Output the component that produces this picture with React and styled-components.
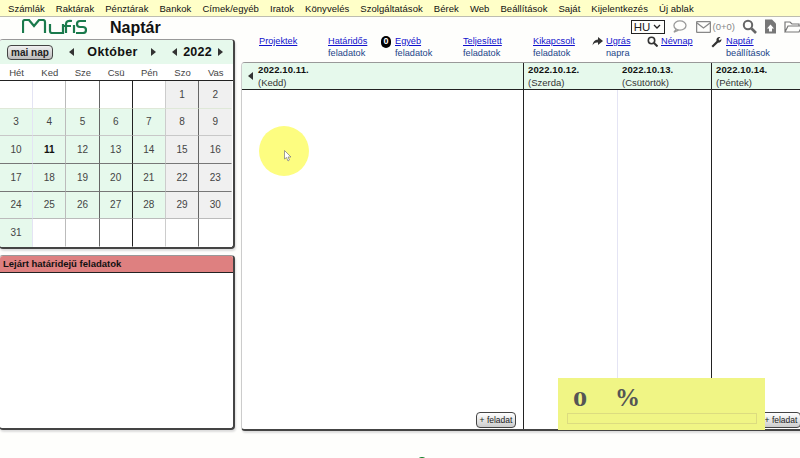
import React from "react";
import styled, { createGlobalStyle } from "styled-components";

const Global = createGlobalStyle`
  html, body { margin: 0; padding: 0; background: #fefefc; }
  body { font-family: "Liberation Sans", Arial, sans-serif; width: 800px; height: 458px; overflow: hidden; }
  #root { width: 800px; height: 458px; overflow: hidden; }
`;

const Page = styled.div`position: relative; width: 800px; height: 458px; overflow: hidden; color: #111;`;
const MenuBar = styled.nav`display: flex; height: 16px; background: #ffffc8; border-bottom: 1px solid #bdbdb0; padding-left: 8px; gap: 11px; align-items: center;`;
const MenuItem = styled.span`font-size: 9.5px; letter-spacing: 0.05px; color: #111; white-space: nowrap;`;
const Body = styled.div`display: grid; grid-template-columns: 235px 559px; column-gap: 6px; height: 414px;`;
const LeftCol = styled.div`display: flex; flex-direction: column;`;
const LogoRow = styled.div`display: flex; align-items: center; height: 22px; padding-left: 22px;`;
const PageTitle = styled.h1`margin: 0 0 0 23px; font-size: 16px; font-weight: 700; color: #111;`;
const Panel = styled.section`border: 1px solid #444; border-width: 1px 2px 2px 1px; border-left-color: #ccc; border-top-color: #999; border-radius: 4px; box-shadow: 1px 2px 2px #ddd; background: #fff; overflow: hidden; margin-left: -1px;`;
const CalendarPanel = styled(Panel)`height: 207px;`;
const OverduePanel = styled(Panel)`height: 172px; margin-top: 6px;`;
const CalHead = styled.div`display: flex; align-items: center; height: 24px; background: #e6f9ec; padding-left: 7px;`;
const TodayBtn = styled.button`width: 46px; height: 15px; padding: 0; border: 1px solid #444; border-radius: 4px; background: linear-gradient(#f0f0f0, #bbb); font: 700 10px "Liberation Sans", sans-serif; color: #222;`;
const Arrow = styled.span`width: 0; height: 0; border-style: solid; border-width: 4px 0; border-color: transparent; margin: ${p => p.$m || 0};
  ${p => p.$right ? "border-left: 5px solid #333;" : "border-right: 5px solid #333;"}`;
const Month = styled.span`width: 77px; text-align: center; font-size: 12.5px; font-weight: 700; letter-spacing: 0.35px;`;
const Year = styled.span`width: 41px; text-align: center; font-size: 12.5px; font-weight: 700; letter-spacing: 0.2px;`;
const Week = styled.div`display: grid; grid-template-columns: repeat(7, 33.2px); height: 16px; align-items: center; background: #fff; border-bottom: 1px solid #222;`;
const WeekDay = styled.span`text-align: center; font-size: 9.5px; color: #444;`;
const Days = styled.div`display: grid; grid-template-columns: repeat(7, 33.2px); grid-auto-rows: 27.67px;`;
const rowLine = ["#dfe8d8", "#c8c8c8", "#777", "#777", "#bbb", "transparent"];
const colLine = ["#e4e4f4", "#bbb", "#666", "#222", "#ccc", "#666", "transparent"];
const Day = styled.div`display: flex; align-items: center; justify-content: center; font-size: 10px; color: #444; box-sizing: border-box;
  font-weight: ${p => p.$today ? 700 : 400}; ${p => p.$today ? "color:#111;" : ""}
  background: ${p => p.$kind === "work" ? "#e6f9ec" : p.$kind === "end" ? "#f0f0f0" : "#fff"};
  border-bottom: 1px solid ${p => rowLine[p.$r]};
  border-right: 1px solid ${p => colLine[p.$c]};`;
const OverdueHead = styled.div`height: 16px; background: #de8080; border-bottom: 1px solid #222; font-size: 9.5px; font-weight: 700; padding-left: 3px; line-height: 15px; color: #111;`;
const RightCol = styled.div`display: flex; flex-direction: column;`;
const TopLinks = styled.div`position: relative; display: flex; height: 45px; padding: 19px 0 0 18px; box-sizing: border-box; font-size: 9.2px;`;
const LinkCol = styled.div`width: ${p => p.$w}px; display: flex; flex-direction: column; line-height: 11.5px; flex: none; position: relative; color: #224488;`;
const A = styled.a`color: #11c; text-decoration: underline;`;
const Badge = styled.span`position: absolute; left: -14px; top: 0; width: 10px; height: 12px; border-radius: 5px; background: #000; color: #fff; font-size: 9px; font-weight: 700; display: flex; align-items: center; justify-content: center;`;
const ToolIcon = styled.svg`position: absolute; left: ${p => p.$l}px; top: ${p => p.$t || 0}px;`;
const RightTools = styled.div`position: absolute; top: 1px; right: -2px; display: flex; align-items: center; height: 17px; gap: 8px;`;
const Lang = styled.div`width: 32px; height: 12px; margin-right: -1px; border: 1px solid #222; font-size: 11.5px; display: flex; align-items: center; justify-content: center; gap: 3px; color: #222;`;
const ChatIcon = styled.svg`margin-right: 1px;`;
const Count = styled.span`font-size: 9.5px; color: #888; margin-left: -6px; margin-right: -1px;`;
const MainPanel = styled(Panel)`height: 366px; width: 560px; margin-left: 0; border-right: none; border-radius: 4px 0 0 4px; display: grid; grid-template-columns: 282px 94px 94px 1fr; grid-template-rows: 27px 1fr;`;
const DayHead = styled.div`background: #e6f9ec; border-bottom: 1px solid #222; border-right: ${p => p.$sep ? "1px solid #222" : "none"}; padding: 0 0 0 ${p => p.$pad || 4}px; font-size: 9.5px; line-height: 13px; position: relative; box-sizing: border-box;`;
const DateTxt = styled.div`font-weight: 700; letter-spacing: .1px;`;
const DayName = styled.div`color: #333;`;
const HeadArrow = styled(Arrow)`position: absolute; left: 6px; top: 9px;`;
const DayCol = styled.div`position: relative; border-right: 1px solid ${p => p.$dark ? "#222" : p.$none ? "transparent" : "#e4e4f4"};`;
const AddBtn = styled.button`position: absolute; right: ${p => p.$r}px; bottom: 1px; width: 40px; height: 16px; padding: 0; border: 1px solid #444; border-radius: 4px; background: linear-gradient(#fff, #ccc); font: 8.5px "Liberation Sans", sans-serif; color: #222;`;
const Highlight = styled.div`position: absolute; left: 259px; top: 126px; width: 50px; height: 50px; border-radius: 50%; background: #fdfd80;`;
const Cursor = styled.svg`position: absolute; left: 284px; top: 150px;`;
const Progress = styled.div`position: absolute; left: 558px; top: 378px; width: 207px; height: 52px; background: #f0f585; box-sizing: border-box; padding: 5px 8px 0 9px;`;
const Pct = styled.div`display: flex; font: 700 25px "Liberation Serif", serif; color: #555; height: 29px; line-height: 29px; padding-left: 6px;`;
const Zero = styled.span`display: inline-block; width: 14px; font-size: 21px; line-height: 33px; transform: scaleX(1.35); transform-origin: left center; margin-right: 28px;`;
const Bar = styled.div`height: 9px; border: 1px solid #dcdc80; margin-top: 1px;`;
const Crumb = styled.div`position: absolute; left: 416px; top: 457px; width: 12px; height: 12px; border: 1px solid #0a7a20; border-radius: 50%; box-sizing: border-box;`;
const LogoMark = styled.svg`margin-top: -4px; flex: none;`;

const menu = ["Számlák","Raktárak","Pénztárak","Bankok","Címek/egyéb","Iratok","Könyvelés","Szolgáltatások","Bérek","Web","Beállítások","Saját","Kijelentkezés","Új ablak"];
const weekdays = ["Hét","Ked","Sze","Csü","Pén","Szo","Vas"];
const cells = [...Array(5).fill(null), 1, 2];
for (let d = 3; d <= 31; d++) cells.push(d);
while (cells.length < 42) cells.push(null);

const Logo = () => (
  <LogoMark width="65" height="15" viewBox="0 0 65 15" fill="none" stroke="#1a7a4c" strokeWidth="2.2">
    <path d="M1 14 L1 3 Q1 1 3 1 L7 1 L12 7 L17 1 L21 1 Q23 1 23 3 L23 14" />
    <path d="M28 5 V12 Q28 14 30 14 H41 V5" />
    <path d="M50 2 Q44 1 44 5 V14 M42 7 H49" />
    <path d="M52 6 V14" />
    <path d="M64 2 H58 Q55 2 55 5 Q55 8 58 8 H61 Q64 8 64 11 Q64 14 61 14 H54" />
  </LogoMark>
);

export default function App() {
  return (
    <Page>
      <Global />
      <MenuBar>{menu.map(m => <MenuItem key={m}>{m}</MenuItem>)}</MenuBar>
      <Body>
        <LeftCol>
          <LogoRow><Logo /><PageTitle>Naptár</PageTitle></LogoRow>
          <CalendarPanel>
            <CalHead>
              <TodayBtn>mai nap</TodayBtn>
              <Arrow $m="0 0 0 16px" />
              <Month>Október</Month>
              <Arrow $right />
              <Arrow $m="0 0 0 16px" />
              <Year>2022</Year>
              <Arrow $right />
            </CalHead>
            <Week>{weekdays.map(w => <WeekDay key={w}>{w}</WeekDay>)}</Week>
            <Days>
              {cells.map((d, i) => {
                const c = i % 7;
                const kind = d === null ? "none" : c >= 5 ? "end" : "work";
                return <Day key={i} $c={c} $r={Math.floor(i / 7)} $kind={kind} $today={d === 11}>{d}</Day>;
              })}
            </Days>
          </CalendarPanel>
          <OverduePanel><OverdueHead>Lejárt határidejű feladatok</OverdueHead></OverduePanel>
        </LeftCol>
        <RightCol>
          <TopLinks>
            <LinkCol $w={69}><A>Projektek</A></LinkCol>
            <LinkCol $w={67}><A>Határidős</A><span>feladatok</span></LinkCol>
            <LinkCol $w={68}><Badge>0</Badge><A>Egyéb</A><span>feladatok</span></LinkCol>
            <LinkCol $w={70}><A>Teljesített</A><span>feladatok</span></LinkCol>
            <LinkCol $w={73}><A>Kikapcsolt</A><span>feladatok</span></LinkCol>
            <LinkCol $w={55}>
              <ToolIcon $l={-14} $t={1} width="11" height="9" viewBox="0 0 11 9"><path d="M6 0 L11 4 L6 8 V5.5 Q2 5 0.5 8.5 Q1 3 6 2.5 Z" fill="#333"/></ToolIcon>
              <A>Ugrás</A><span>napra</span>
            </LinkCol>
            <LinkCol $w={65}>
              <ToolIcon $l={-14} $t={0} width="11" height="11" viewBox="0 0 11 11" fill="none" stroke="#333"><circle cx="4.5" cy="4.5" r="3.2" strokeWidth="1.6"/><path d="M7 7 L10.5 10.5" strokeWidth="2"/></ToolIcon>
              <A>Névnap</A>
            </LinkCol>
            <LinkCol $w={60}>
              <ToolIcon $l={-15} $t={0} width="11" height="12" viewBox="0 0 11 12"><path d="M0.5 10 L5.5 5 Q5 1.5 8 1 L9.5 1 L7.5 3 L8.5 4.5 L10.5 3 Q10.5 6.5 7 6.8 L2 11.5 Z" fill="#333"/></ToolIcon>
              <A>Naptár</A><span>beállítások</span>
            </LinkCol>
            <RightTools>
              <Lang>HU <svg width="8" height="5" viewBox="0 0 8 5" fill="none" stroke="#222" strokeWidth="1.3"><path d="M1 1 L4 4 L7 1"/></svg></Lang>
              <ChatIcon width="15" height="13" viewBox="0 0 16 14" fill="none" stroke="#999" strokeWidth="1.4"><ellipse cx="8.5" cy="6" rx="6.5" ry="5"/><path d="M4.5 10 L2 13 L7 11"/></ChatIcon>
              <svg width="15" height="12" viewBox="0 0 15 12" fill="none" stroke="#888" strokeWidth="1.3"><rect x=".6" y=".6" width="13.8" height="10.8" rx="1"/><path d="M1 2 L7.5 7 L14 2"/></svg>
              <Count>(0+0)</Count>
              <svg width="15" height="15" viewBox="0 0 15 15" fill="none" stroke="#666"><circle cx="6" cy="6" r="4.2" strokeWidth="2"/><path d="M9.5 9.5 L14 14" strokeWidth="2.6"/></svg>
              <svg width="11" height="15" viewBox="0 0 11 14"><path d="M0 0 H7 L11 4 V14 H0 Z" fill="#777"/><path d="M5.5 5 L9 9 H7 V12 H4 V9 H2 Z" fill="#fff"/></svg>
              <svg width="18" height="13" viewBox="0 0 18 13" fill="none" stroke="#777" strokeWidth="1.2"><path d="M1 12 V2 H6 L8 4 H15 V6 M1 12 L4 6 H18 L15 12 Z"/></svg>
            </RightTools>
          </TopLinks>
          <MainPanel>
            <DayHead $sep $pad={16}><HeadArrow /><DateTxt>2022.10.11.</DateTxt><DayName>(Kedd)</DayName></DayHead>
            <DayHead><DateTxt>2022.10.12.</DateTxt><DayName>(Szerda)</DayName></DayHead>
            <DayHead $sep><DateTxt>2022.10.13.</DateTxt><DayName>(Csütörtök)</DayName></DayHead>
            <DayHead><DateTxt>2022.10.14.</DateTxt><DayName>(Péntek)</DayName></DayHead>
            <DayCol $dark><AddBtn $r={7}>+ feladat</AddBtn></DayCol>
            <DayCol />
            <DayCol $dark />
            <DayCol $none><AddBtn $r={0}>+ feladat</AddBtn></DayCol>
          </MainPanel>
        </RightCol>
      </Body>
      <Highlight />
      <Cursor width="8" height="12" viewBox="0 0 8 12"><path d="M0.5 0.5 V9 L2.5 7.5 L4 11 L5.5 10 L4 7 H7 Z" fill="#fff" stroke="#777" strokeWidth=".7"/></Cursor>
      <Progress><Pct><Zero>0</Zero><span>%</span></Pct><Bar /></Progress>
      <Crumb />
    </Page>
  );
}
